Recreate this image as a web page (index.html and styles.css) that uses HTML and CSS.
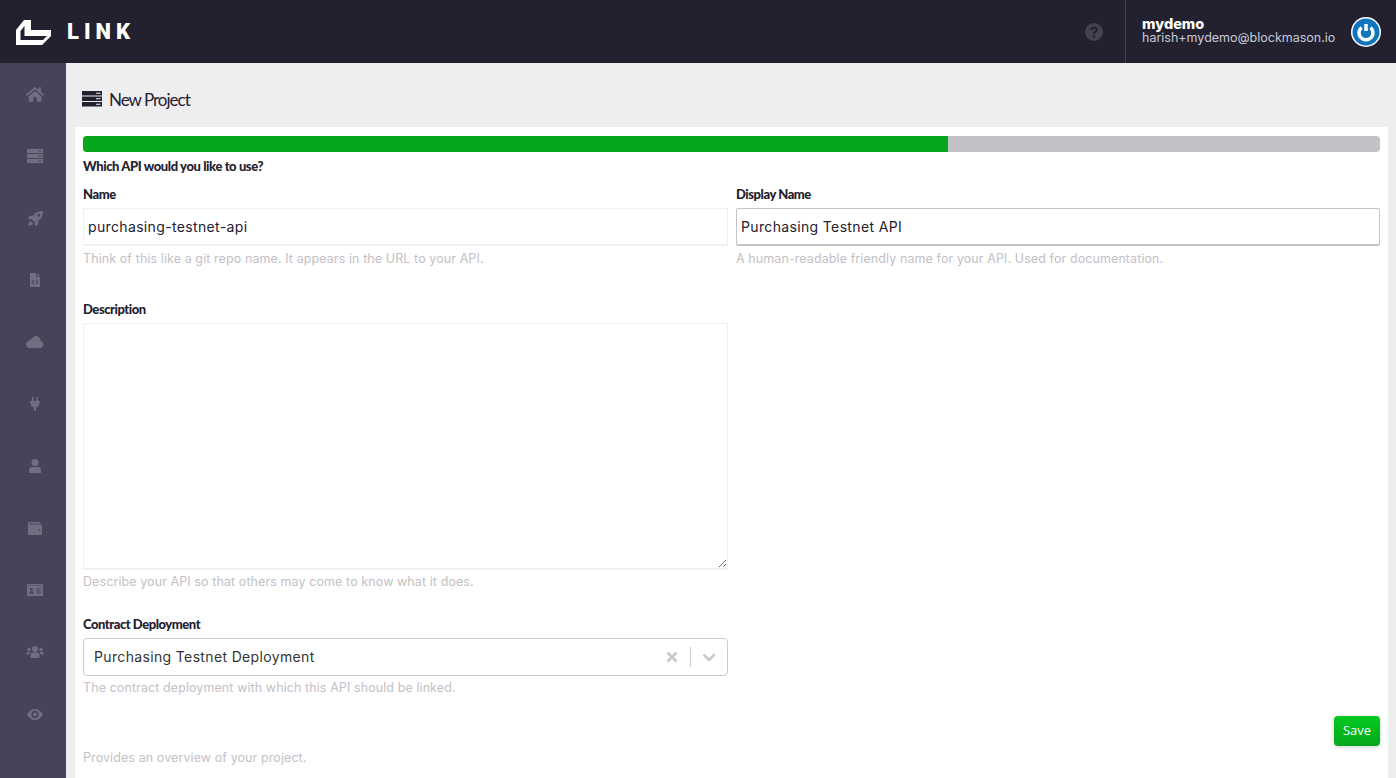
FILE: index.html
```html
<!DOCTYPE html>
<html lang="en">
<head>
    <meta charset="UTF-8">
    <meta name="viewport" content="width=device-width, initial-scale=1.0">
    <title>Link - New Project</title>
    <link rel="stylesheet" href="styles.css">
</head>
<body>
    <!-- Top bar -->
    <header class="topbar">
        <div class="brand">
            <svg class="brand-mark" viewBox="0 0 36 26" width="36" height="26">
                <path fill="#fff" fill-rule="evenodd" d="M8 1H15V11H35V17L26 26H0V11ZM4.500 12L8.500 7V17H31L27 21H4.500Z"/>
            </svg>
            <span class="brand-name">LINK</span>
        </div>
        <div class="help">
            <svg viewBox="0 0 18 18" width="18" height="18">
                <circle cx="9" cy="9" r="9" fill="#45434f"/>
                <path fill="none" stroke="#232130" stroke-width="2.200" d="M6.200 7C6.400 3.800 11.800 3.800 11.800 6.800C11.800 8.700 9 8.600 9 10.800"/>
                <rect x="7.800" y="12.200" width="2.400" height="2.400" fill="#232130"/>
            </svg>
        </div>
        <div class="account">
            <div class="account-text">
                <div class="account-name">mydemo</div>
                <div class="account-email">harish+mydemo@blockmason.io</div>
            </div>
            <svg class="avatar" viewBox="0 0 30 30" width="30" height="30">
                <circle cx="15" cy="15" r="15" fill="#fff"/>
                <circle cx="15" cy="15" r="13.500" fill="#0f75bc"/>
                <path fill="none" stroke="#fff" stroke-width="3.500" d="M10.500 10.500A7 7 0 1 0 19.500 10.500"/>
                <path stroke="#fff" stroke-width="3.500" d="M15 7V14"/>
            </svg>
        </div>
    </header>

    <div class="layout">
        <!-- Side nav -->
        <nav class="sidebar">
            <a class="nav-item" href="#"><svg viewBox="0 0 20 18" width="18"><path d="M10 1L0 9.500L1 11L10 3.500L19 11L20 9.500L16.500 6.500V1.500H14V4.500ZM3 11.500V17.500H8V12.500H12V17.500H17V11.500L10 5.500Z"/></svg></a>
            <a class="nav-item" href="#"><svg viewBox="0 0 16 14" width="16"><path fill-rule="evenodd" d="M0 0H16V4H0ZM0 5H16V9H0ZM0 10H16V14H0ZM11 1.500V2.500H14.500V1.500ZM11 6.500V7.500H14.500V6.500ZM11 11.500V12.500H14.500V11.500Z"/></svg></a>
            <a class="nav-item" href="#"><svg viewBox="0 0 16 16" width="15"><path fill-rule="evenodd" d="M16 0C10.500 0 7.500 2 5.500 5H1.500L0 8.500H3.500L7.500 12.500V16L11 14.500V10.500C14 8.500 16 5.500 16 0ZM11.500 3A1.500 1.500 0 1 1 11.500 6A1.500 1.500 0 1 1 11.500 3ZM2.500 10.500C1 11.500 .5 14 .5 15.500C2 15.500 4.500 15 5.500 13.500Z"/></svg></a>
            <a class="nav-item" href="#"><svg viewBox="0 0 10 14" width="10"><path fill-rule="evenodd" d="M0 0H6V4H10V14H0ZM7 0L10 3H7ZM3.500 6.500L1.500 9L3.500 11.500L4.200 10.800L2.800 9L4.200 7.200ZM6.500 6.500L5.800 7.200L7.200 9L5.800 10.800L6.500 11.500L8.500 9Z"/></svg></a>
            <a class="nav-item" href="#"><svg viewBox="0 0 18 12" width="18"><path d="M3.500 12A3.500 3.500 0 0 1 2.800 5.100C3 3.500 4.500 2.700 5.800 3.200C6.700 1.200 8.500 0 10 0C12.500 0 14.500 2 14.500 4.500V5.100A3.500 3.500 0 0 1 14.500 12Z"/></svg></a>
            <a class="nav-item" href="#"><svg viewBox="0 0 10 14" width="10"><path d="M2 0H3.500V4H6.500V0H8V4H10V5.500H9.300V7C9.300 9 8 10 6 10.500V14H4V10.500C2 10 .7 9 .7 7V5.500H0V4H2Z"/></svg></a>
            <a class="nav-item" href="#"><svg viewBox="0 0 12 14" width="12"><circle cx="6" cy="3.500" r="3.500"/><path d="M0 14V11.500C0 9 1.500 8 3 8H9C10.500 8 12 9 12 11.500V14Z"/></svg></a>
            <a class="nav-item" href="#"><svg viewBox="0 0 14 13" width="14"><path fill-rule="evenodd" d="M1.500 0H12L12.500 1.500H1.500V2.500H12.500C13.500 2.500 14 3 14 3.800V11.700C14 12.500 13.500 13 12.500 13H1.500C.5 13 0 12.500 0 11.500V1.500C0 .5.500 0 1.500 0ZM10.500 7V8.500H12V7Z"/></svg></a>
            <a class="nav-item" href="#"><svg viewBox="0 0 16 12" width="16"><path fill-rule="evenodd" d="M0 0H16V12H0ZM1 1.500V2H15V1.500ZM3.200 4V6.500H5.800V4ZM2 9.500H7C7 8 6 7.300 4.500 7.300C3 7.300 2 8 2 9.500ZM9.500 4.500V5.500H14V4.500ZM9.500 6.500V7.500H14V6.500ZM9.500 8.500V9.500H14V8.500Z"/></svg></a>
            <a class="nav-item" href="#"><svg viewBox="0 0 18 12" width="18"><circle cx="9" cy="3" r="3"/><circle cx="3" cy="3.500" r="1.800"/><circle cx="15" cy="3.500" r="1.800"/><path d="M4.500 12V9C4.500 7.500 5.500 6.500 7 6.500H11C12.500 6.500 13.500 7.500 13.500 9V12ZM0 8.500C0 7 1 6 2 6H4.500C4 6.500 3.500 7.500 3.500 8.500Z M18 8.500C18 7 17 6 16 6H13.500C14 6.500 14.500 7.500 14.500 8.500Z"/></svg></a>
            <a class="nav-item" href="#"><svg viewBox="0 0 16 11" width="16"><path fill-rule="evenodd" d="M0 5.500C2 2 5 0 8 0C11 0 14 2 16 5.500C14 9 11 11 8 11C5 11 2 9 0 5.500ZM8 1.800A3.700 3.700 0 1 0 8 9.200A3.700 3.700 0 1 0 8 1.800ZM8 3.500A2 2 0 1 1 8 7.500A2 2 0 1 1 8 3.500Z"/></svg></a>
        </nav>

        <main class="content">
            <div class="page-title">
                <svg viewBox="0 0 20 16" width="20" height="16"><path fill="#232130" fill-rule="evenodd" d="M0 0H20V4.500H0ZM0 5.500H20V10H0ZM0 11H20V15.500H0ZM14 1.700V2.800H18.500V1.700ZM14 7.200V8.300H18.500V7.200ZM14 12.700V13.800H18.500V12.700Z"/></svg>
                <h1>New Project</h1>
            </div>

            <section class="card">
                <div class="progress"><div class="progress-fill" style="width: 66.7%"></div></div>
                <h2 class="question">Which API would you like to use?</h2>

                <div class="row row-names">
                    <div class="field">
                        <label for="name">Name</label>
                        <input class="text-input" type="text" id="name" value="purchasing-testnet-api">
                        <p class="hint">Think of this like a git repo name. It appears in the URL to your API.</p>
                    </div>
                    <div class="field">
                        <label for="display-name">Display Name</label>
                        <input class="text-input text-input-active" type="text" id="display-name" value="Purchasing Testnet API">
                        <p class="hint">A human-readable friendly name for your API. Used for documentation.</p>
                    </div>
                </div>

                <div class="row row-description">
                    <div class="field">
                        <label for="description">Description</label>
                        <textarea class="text-area" id="description"></textarea>
                        <p class="hint">Describe your API so that others may come to know what it does.</p>
                    </div>
                </div>

                <div class="row row-deployment">
                    <div class="field">
                        <label>Contract Deployment</label>
                        <div class="select">
                            <span class="select-value">Purchasing Testnet Deployment</span>
                            <svg viewBox="0 0 12 12" width="12" height="12"><path stroke="#c8c8c8" stroke-width="2.600" d="M1.500 1.500L10.500 10.500M10.500 1.500L1.500 10.500"/></svg>
                            <span class="select-sep"></span>
                            <svg viewBox="0 0 14 9" width="14" height="9"><path fill="none" stroke="#c8c8c8" stroke-width="2.600" d="M1.500 1.500L7 7L12.500 1.500"/></svg>
                        </div>
                        <p class="hint">The contract deployment with which this API should be linked.</p>
                    </div>
                </div>

                <div class="actions"><button class="save-btn" type="button">Save</button></div>
                <p class="hint hint-overview">Provides an overview of your project.</p>
            </section>
        </main>
    </div>
</body>
</html>
```

FILE: styles.css
```css
* {
    box-sizing: border-box;
}
html, body {
    height: 100%;
}
body {
    margin: 0;
    overflow: hidden;
    background-color: #eeeeee;
    font-family: Inter, "Noto Sans", sans-serif;
    color: #232130;
}
.topbar {
    display: flex;
    align-items: center;
    height: 63px;
    background-color: #232130;
}
.brand {
    display: flex;
    align-items: center;
    padding-left: 16px;
    flex: 1;
}
.brand-name {
    margin-left: 15px;
    font-family: Roboto, sans-serif;
    font-size: 22px;
    font-weight: 900;
    letter-spacing: 5px;
    color: #fff;
}
.help {
    display: flex;
    margin-right: 22px;
}
.account {
    display: flex;
    align-items: center;
    height: 63px;
    width: 271px;
    padding: 0 15px 0 16px;
    border-left: 1px solid #45434f;
}
.account-text {
    flex: 1;
    padding-bottom: 2px;
}
.account-name {
    font-size: 14.500px;
    line-height: 14px;
    font-weight: 800;
    color: #fff;
}
.account-email {
    font-size: 12.500px;
    line-height: 14px;
    color: #c9cad6;
}
.layout {
    display: flex;
    height: 715px;
}
.sidebar {
    width: 66px;
    flex-shrink: 0;
    display: flex;
    flex-direction: column;
    background-color: #47445a;
}
.nav-item {
    display: flex;
    align-items: center;
    justify-content: center;
    height: 62px;
    padding-left: 4px;
}
.nav-item svg {
    fill: #716e82;
}
.content {
    flex: 1;
    padding: 0 8px 0 9px;
}
.page-title {
    display: flex;
    align-items: center;
    height: 64px;
    padding-left: 7px;
    padding-top: 8px;
}
.page-title h1 {
    margin: 0 0 0 7px;
    font-family: Lato, sans-serif;
    font-size: 17px;
    font-weight: 400;
    letter-spacing: -1px;
}
.card {
    height: 651px;
    padding: 9px 8px;
    background-color: #fff;
}
.progress {
    height: 16px;
    border-radius: 4px;
    background-color: #c2c1c6;
    overflow: hidden;
}
.progress-fill {
    height: 100%;
    background-color: #05a81a;
}
.question {
    margin: 6px 0 0;
    font-family: Lato, sans-serif;
    font-size: 13px;
    line-height: 16px;
    font-weight: 900;
    letter-spacing: -0.4px;
}
.row {
    display: grid;
    grid-template-columns: 645px 644px;
    gap: 8px;
}
.row-names {
    margin-top: 14px;
}
.row-description {
    margin-top: 37px;
}
.row-deployment {
    margin-top: 29px;
}
label {
    display: block;
    height: 14px;
    font-family: Lato, sans-serif;
    font-size: 13px;
    line-height: 12px;
    font-weight: 900;
    letter-spacing: -0.45px;
}
.text-input {
    display: block;
    width: 100%;
    height: 38px;
    margin-top: 6px;
    padding: 0 4px;
    border: 1px solid #f0f0f0;
    border-bottom-width: 2px;
    outline: none;
    font-family: inherit;
    font-size: 14px;
    letter-spacing: 0.35px;
    color: #232130;
    background-color: #fff;
}
.text-input-active {
    border-color: #c4c4c4;
    border-radius: 2px;
}
.text-area {
    display: block;
    width: 100%;
    height: 247px;
    margin-top: 6px;
    border: 1px solid #f0f0f0;
    border-bottom-width: 2px;
    outline: none;
    background-color: #fff;
}
.hint {
    margin: 5px 0 0;
    font-size: 12.500px;
    line-height: 15px;
    letter-spacing: 0.09px;
    color: #c2c1c6;
}
.text-area + .hint, .select + .hint {
    margin-top: 4px;
}
.select {
    display: flex;
    align-items: center;
    height: 38px;
    margin-top: 6px;
    padding: 0 11px 0 10px;
    border: 1px solid #cccccc;
    border-radius: 4px;
}
.select-value {
    flex: 1;
    padding-bottom: 2px;
    font-size: 14px;
    letter-spacing: 0.35px;
    color: #333;
}
.select-sep {
    width: 1px;
    height: 20px;
    margin: 0 11px 0 12px;
    background-color: #cccccc;
}
.actions {
    display: flex;
    justify-content: flex-end;
    margin-top: 21px;
}
.save-btn {
    width: 46px;
    height: 30px;
    padding: 0 0 2px;
    border: none;
    border-radius: 4px;
    background: linear-gradient(#03c923, #05a81a);
    box-shadow: 0 1px 4px rgba(0, 0, 0, 0.2);
    font-family: "Open Sans", sans-serif;
    font-size: 13px;
    color: #fff;
}
.hint-overview {
    margin-top: 4px;
}
```
